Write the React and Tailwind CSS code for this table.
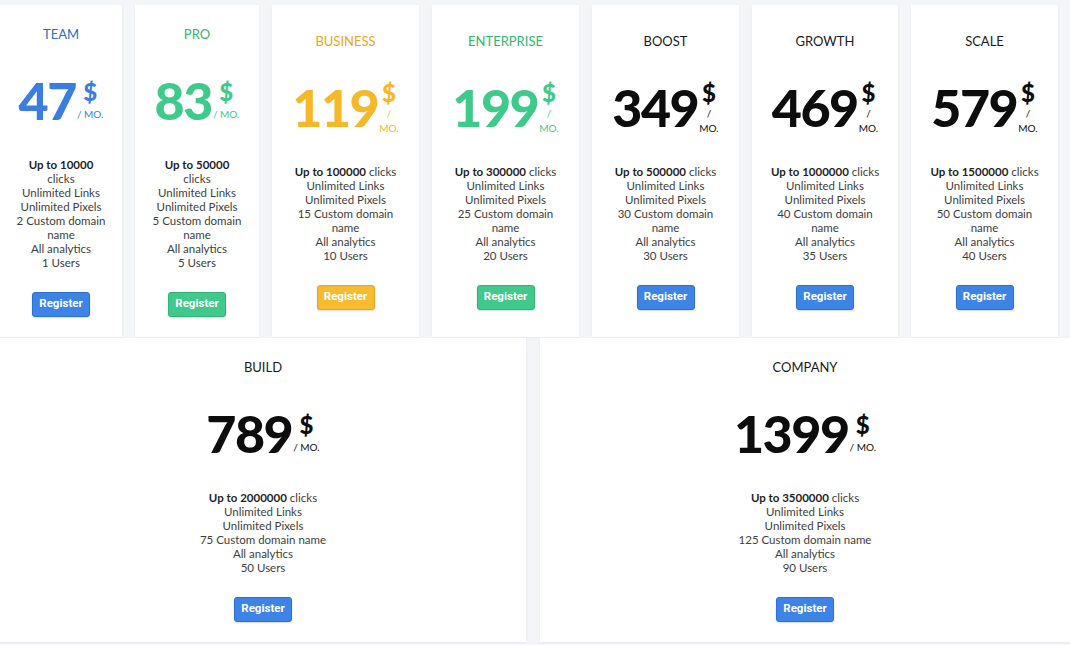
import React from "react";

const colors = {
  blue: {
    title: "text-[#2b6ccb]",
    price: "text-[#3a7ee0]",
    button: "bg-[#3d84e6] border-[#2f6fcf]",
  },
  green: {
    title: "text-[#2fb574]",
    price: "text-[#3dca8a]",
    button: "bg-[#41c88b] border-[#33b277]",
  },
  yellow: {
    title: "text-[#e8a61c]",
    price: "text-[#f5b829]",
    button: "bg-[#f6bb2e] border-[#e6a81f]",
  },
  black: {
    title: "text-[#1a1a1a]",
    price: "text-[#0d0d0d]",
    button: "bg-[#3d84e6] border-[#2f6fcf]",
  },
};

const topPlans = [
  { name: "TEAM", price: "47", clicks: "10000", domains: 2, users: 1, color: "blue", width: "w-[122px]", narrow: true },
  { name: "PRO", price: "83", clicks: "50000", domains: 5, users: 5, color: "green", width: "w-[124px]", narrow: true },
  { name: "BUSINESS", price: "119", clicks: "100000", domains: 15, users: 10, color: "yellow", width: "w-[147px]", stack: true },
  { name: "ENTERPRISE", price: "199", clicks: "300000", domains: 25, users: 20, color: "green", width: "w-[147px]", stack: true },
  { name: "BOOST", price: "349", clicks: "500000", domains: 30, users: 30, color: "black", width: "w-[147px]", stack: true },
  { name: "GROWTH", price: "469", clicks: "1000000", domains: 40, users: 35, color: "black", width: "w-[146px]", stack: true },
  { name: "SCALE", price: "579", clicks: "1500000", domains: 50, users: 40, color: "black", width: "w-[147px]", stack: true },
];

const bottomPlans = [
  { name: "BUILD", price: "789", clicks: "2000000", domains: 75, users: 50, color: "black", width: "w-[526px]", wide: true },
  { name: "COMPANY", price: "1399", clicks: "3500000", domains: 125, users: 90, color: "black", width: "flex-1", wide: true },
];

function PlanCard({ plan }) {
  const c = colors[plan.color];

  return (
    <div
      className={`${plan.width} shrink-0 h-full flex flex-col items-center justify-center bg-white shadow-[0_1px_2px_rgba(20,30,60,0.06)]`}
    >
      <h3 className={`text-[13px] leading-4 uppercase ${c.title}`}>{plan.name}</h3>

      <div className={`mt-[32px] h-[53px] flex items-center ${c.price}`}>
        <span className="text-[52px] leading-none font-black tracking-[-1.5px]">{plan.price}</span>
        <span className="ml-[1px] flex flex-col items-center">
          <span className="text-[24px] leading-[24px] font-black">$</span>
          {plan.stack ? (
            <>
              <span className="text-[10px] leading-[11px] mt-[3px]">/</span>
              <span className="text-[10px] leading-[11px] mt-[4px]">MO.</span>
            </>
          ) : (
            <span className="text-[10px] leading-[11px] mt-[5px] whitespace-nowrap">/ MO.</span>
          )}
        </span>
      </div>

      <ul className="mt-[31px] text-[11.5px] leading-[14px] text-[#404040] text-center whitespace-nowrap">
        <li>
          <b className="font-bold text-[#1f1f1f]">Up to {plan.clicks}</b>
          {plan.narrow ? <br /> : " "}
          clicks
        </li>
        <li>Unlimited Links</li>
        <li>Unlimited Pixels</li>
        <li>
          {plan.domains} Custom domain
          {plan.wide ? " " : <br />}
          name
        </li>
        <li>All analytics</li>
        <li>{plan.users} Users</li>
      </ul>

      <button
        className={`mt-[22px] h-[25px] w-[58px] rounded-[3px] border text-white text-[11.5px] font-bold font-['Roboto',sans-serif] shadow-[0_1px_2px_rgba(0,0,0,0.15)] ${c.button}`}
      >
        Register
      </button>
    </div>
  );
}

export default function App() {
  return (
    <div className="w-[1070px] h-[645px] overflow-hidden bg-[#f4f5f9] font-['Lato',sans-serif]">
      <div className="flex gap-[13px] pt-[5px] h-[337px]">
        {topPlans.map((plan) => (
          <PlanCard key={plan.name} plan={plan} />
        ))}
      </div>
      <div className="flex gap-[14px] pt-[1px] h-[305px]">
        {bottomPlans.map((plan) => (
          <PlanCard key={plan.name} plan={plan} />
        ))}
      </div>
    </div>
  );
}
